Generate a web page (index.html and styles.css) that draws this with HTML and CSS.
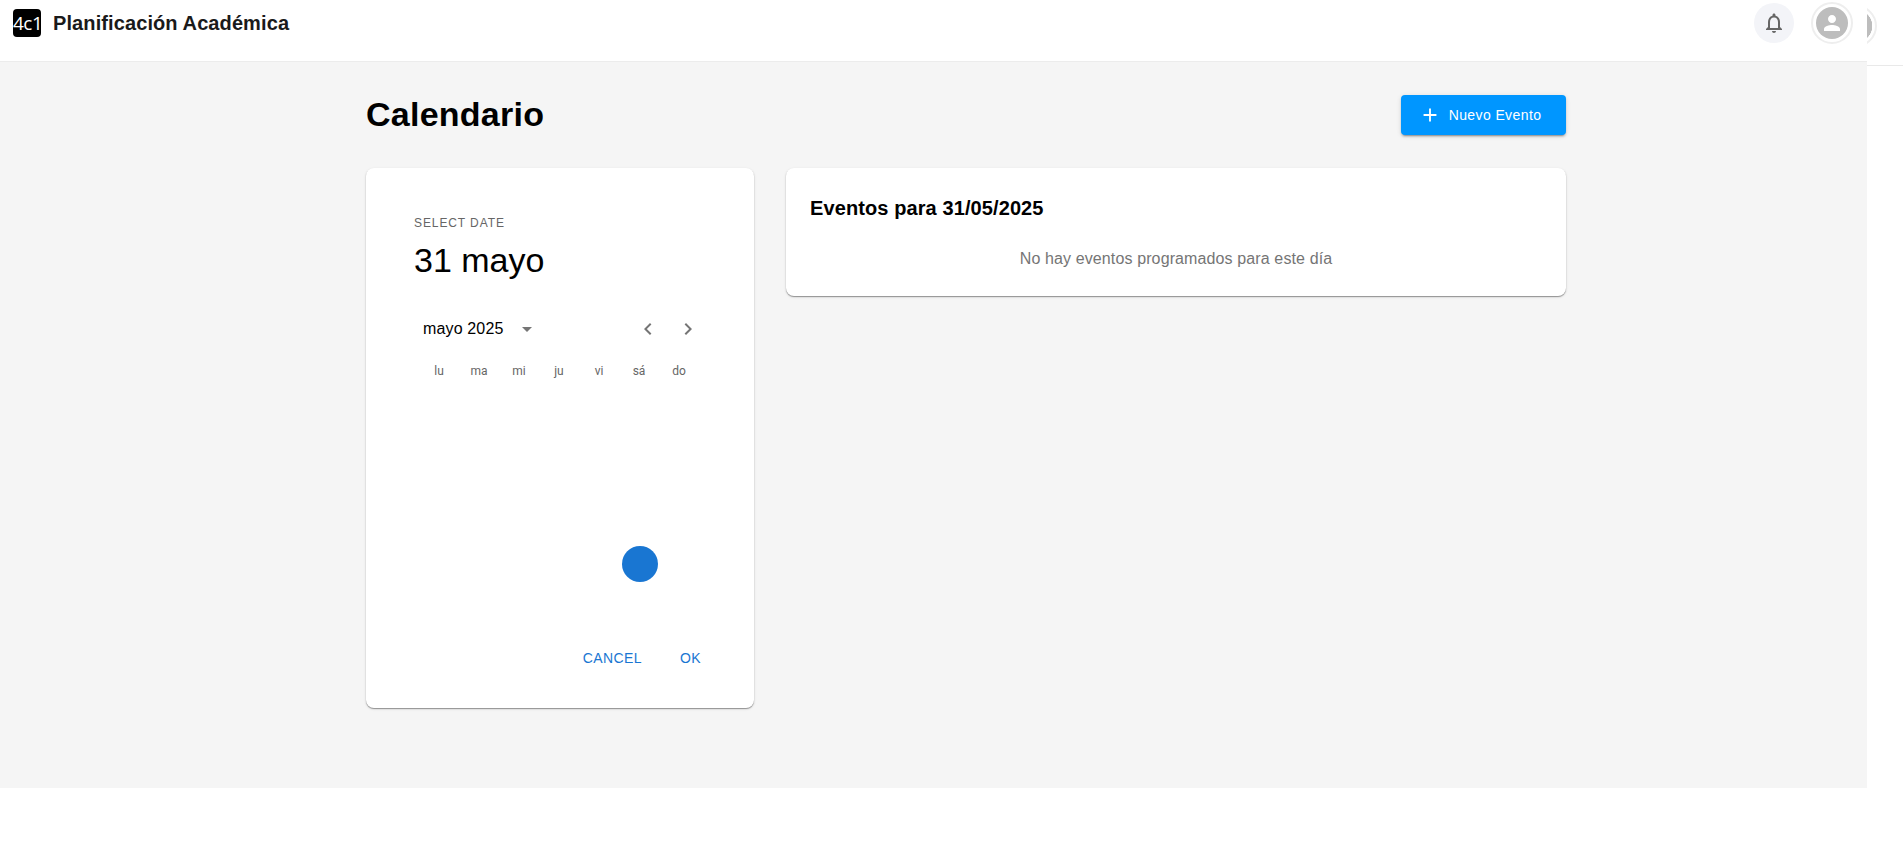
FILE: index.html

```html
<!DOCTYPE html>
<html lang="es">
<head>
    <meta charset="UTF-8">
    <title>Calendario</title>
    <link rel="stylesheet" href="styles.css">
</head>
<body>
    <div class="app">
        <header class="topbar">
            <div class="brand">
                <div class="logo">4c1</div>
                <span class="brand-name">Planificación Académica</span>
            </div>
            <div class="topbar-actions">
                <button class="bell">
                    <svg viewBox="0 0 24 24" width="24" height="24"><path d="M12 22c1.1 0 2-.9 2-2h-4c0 1.1.9 2 2 2zm6-6v-5c0-3.07-1.63-5.64-4.5-6.32V4c0-.83-.67-1.5-1.5-1.5s-1.5.67-1.5 1.5v.68C7.64 5.36 6 7.92 6 11v5l-2 2v1h16v-1l-2-2zm-2 1H8v-6c0-2.48 1.51-4.5 4-4.5s4 2.02 4 4.5v6z"/></svg>
                </button>
                <div class="avatar">
                    <div class="avatar-circle">
                        <svg viewBox="0 0 24 24" width="24" height="24"><path d="M12 12c2.21 0 4-1.79 4-4s-1.79-4-4-4-4 1.79-4 4 1.79 4 4 4zm0 2c-2.67 0-8 1.34-8 4v2h16v-2c0-2.66-5.33-4-8-4z"/></svg>
                    </div>
                </div>
            </div>
        </header>

        <main class="content">
            <div class="page-head">
                <h1>Calendario</h1>
                <button class="btn-new">
                    <svg viewBox="0 0 24 24" width="22" height="22"><path d="M19 13h-6v6h-2v-6H5v-2h6V5h2v6h6v2z"/></svg>
                    Nuevo Evento
                </button>
            </div>

            <div class="columns">
                <section class="card picker">
                    <div class="picker-label">SELECT DATE</div>
                    <div class="picker-date">31 mayo</div>
                    <div class="picker-nav">
                        <span class="picker-month">mayo 2025</span>
                        <svg class="caret" viewBox="0 0 24 24" width="24" height="24"><path d="M7 10l5 5 5-5z"/></svg>
                        <svg class="chev-left" viewBox="0 0 24 24" width="24" height="24"><path d="M15.41 7.41L14 6l-6 6 6 6 1.41-1.41L10.83 12z"/></svg>
                        <svg class="chev-right" viewBox="0 0 24 24" width="24" height="24"><path d="M10 6L8.59 7.41 13.17 12l-4.58 4.59L10 18l6-6z"/></svg>
                    </div>
                    <div class="week">
                        <span>lu</span><span>ma</span><span>mi</span><span>ju</span><span>vi</span><span>sá</span><span>do</span>
                    </div>
                    <div class="days">
                        <div class="day-selected"></div>
                    </div>
                    <div class="picker-actions">
                        <button>CANCEL</button>
                        <button>OK</button>
                    </div>
                </section>

                <section class="card events">
                    <h3>Eventos para 31/05/2025</h3>
                    <p>No hay eventos programados para este día</p>
                </section>
            </div>
        </main>
    </div>

    <div class="strip">
        <div class="strip-avatar"></div>
    </div>
</body>
</html>
```

FILE: styles.css

```css
body { margin: 0; height: 842px; overflow: hidden; display: flex; align-items: flex-start; background: #fff; font-family: 'Liberation Sans', Arial, sans-serif; color: #000; }
button { font-family: inherit; border: none; background: none; cursor: pointer; }

.app { width: 1867px; flex-shrink: 0; }

.topbar { height: 61px; display: flex; justify-content: space-between; border-bottom: 1px solid #ececec; background: #fff; }
.brand { display: flex; align-items: flex-start; padding: 9px 0 0 13px; gap: 12px; }
.logo { width: 28px; height: 28px; border-radius: 4px; background: #000; color: #fff; font-family: 'Open Sans', sans-serif; font-size: 19px; line-height: 28px; text-align: center; letter-spacing: -0.5px; }
.brand-name { font-size: 20px; font-weight: 700; line-height: 28px; color: #1a1a1a; letter-spacing: 0.1px; }

.topbar-actions { display: flex; align-items: flex-start; gap: 17px; padding: 3px 14px 0 0; }
.bell { width: 40px; height: 40px; padding: 8px; border-radius: 50%; background: #f3f4f8; }
.bell svg { display: block; fill: #666; }
.avatar { padding: 3px; border: 2px solid #eee; border-radius: 50%; margin-top: -1px; }
.avatar-circle { width: 32px; height: 32px; border-radius: 50%; background: #bdbdbd; display: flex; align-items: center; justify-content: center; }
.avatar-circle svg { fill: #fff; }

.content { height: 726px; box-sizing: border-box; background: #f5f5f5; padding: 33px 301px 0 366px; }

.page-head { display: flex; justify-content: space-between; align-items: flex-start; height: 73px; }
h1 { margin: -1px 0 0; font-size: 34px; font-weight: 700; line-height: 40px; letter-spacing: 0.25px; }
.btn-new { width: 165px; height: 40px; padding: 0 7px 0 0; display: flex; align-items: center; justify-content: center; gap: 8px; background: #0096ff; color: #fff; font-size: 14px; letter-spacing: 0.4px; border-radius: 4px; box-shadow: 0 3px 1px -2px rgba(0,0,0,.2), 0 2px 2px rgba(0,0,0,.14), 0 1px 5px rgba(0,0,0,.12); }
.btn-new svg { fill: #fff; }

.columns { display: flex; align-items: flex-start; gap: 32px; }
.card { background: #fff; border-radius: 8px; box-shadow: 0 1px 1px rgba(0,0,0,.35), 0 1px 3px rgba(0,0,0,.12); box-sizing: border-box; }

.picker { width: 388px; height: 540px; padding: 48px 48px 0; }
.picker-label { font-size: 12px; line-height: 14px; letter-spacing: 0.9px; color: #666; }
.picker-date { font-size: 34px; line-height: 40px; margin-top: 10px; }
.picker-nav { display: flex; align-items: center; height: 30px; margin-top: 34px; padding-left: 9px; }
.picker-month { font-size: 16px; letter-spacing: 0.15px; }
.caret { fill: #757575; margin-left: 11px; }
.chev-left { fill: #757575; margin-left: auto; }
.chev-right { fill: #757575; margin-left: 16px; margin-right: 6px; }
.week { display: grid; grid-template-columns: repeat(7, 40px); margin-top: 15px; padding-left: 5px; font-family: Roboto, sans-serif; font-size: 12px; line-height: 24px; color: #666; text-align: center; }
.days { display: grid; grid-template-columns: repeat(7, 40px); padding: 163px 0 0 6px; justify-items: center; }
.day-selected { grid-column: 6; width: 36px; height: 36px; border-radius: 50%; background: #1976d2; }
.picker-actions { display: flex; justify-content: flex-end; gap: 38px; margin-top: 66px; padding-right: 5px; }
.picker-actions button { padding: 0; color: #1976d2; font-size: 14px; letter-spacing: 0.4px; line-height: 20px; }

.events { flex: 1; height: 128px; padding: 26px 24px 24px; }
.events h3 { margin: 0; font-size: 20px; line-height: 28px; font-weight: 700; letter-spacing: 0.1px; }
.events p { margin: 25px 0 0; font-size: 16px; line-height: 24px; letter-spacing: 0.12px; color: #757575; text-align: center; }

.strip { flex: 1; height: 65px; border-bottom: 1px solid #e9e9e9; position: relative; overflow: hidden; }
.strip-avatar { position: absolute; left: -32px; top: 5px; width: 42px; height: 42px; box-sizing: border-box; border: 2px solid #eee; border-radius: 50%; background: radial-gradient(circle, #bdbdbd 16px, #fff 16.5px); }
```
